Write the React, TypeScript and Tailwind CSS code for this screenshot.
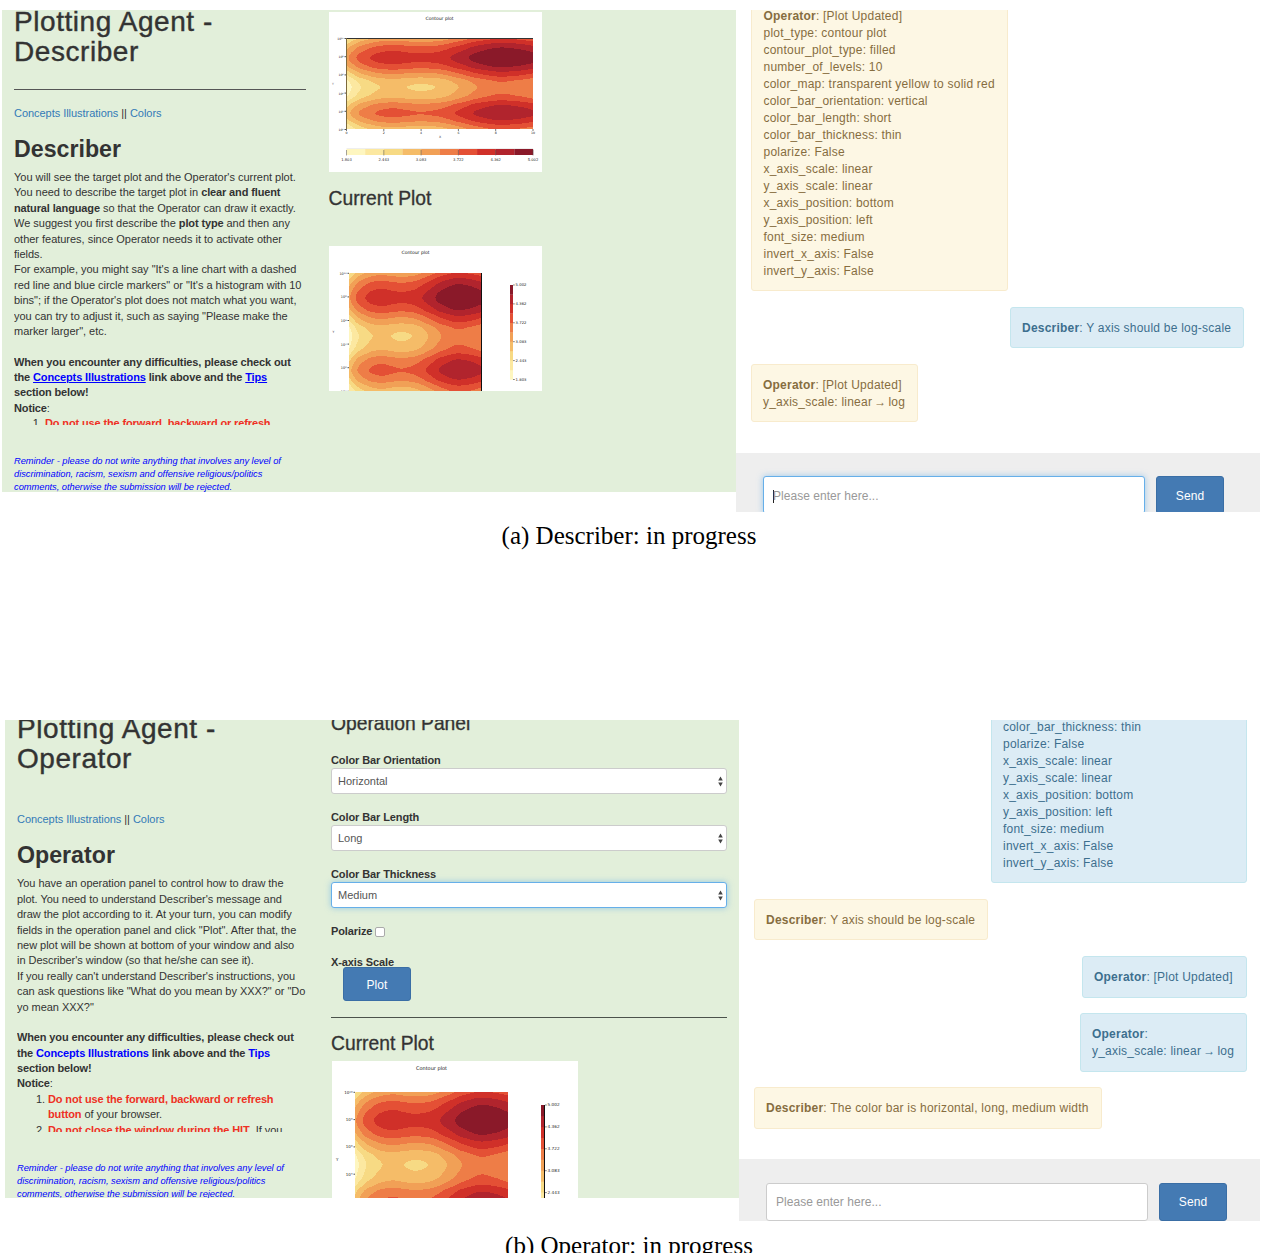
import React from "react";

const LEVEL_COLORS = [
  "#fef6c0", "#fce8a0", "#f7da84", "#f5bc68", "#f1a056",
  "#ee7d47", "#e45035", "#d03029", "#b1242d", "#8a1929",
];

type Knot = [number, number];

const X_PROFILE: Knot[] = [
  [0, 0.35], [0.025, 1], [0.075, 2], [0.18, 3], [0.25, 3.2], [0.32, 3], [0.395, 2.86],
  [0.475, 3], [0.6, 4], [0.7, 5], [0.83, 5.68], [0.92, 5.45], [1, 5],
];
const Y_PROFILE: Knot[] = [
  [0, 1.4], [0.04, 2.3], [0.1, 3.4], [0.21, 4.42], [0.31, 3.4], [0.36, 2.4], [0.417, 1.35], [0.468, 0.4],
  [0.535, 0], [0.617, 0.4], [0.68, 1.3], [0.73, 2.3], [0.825, 3.17], [0.905, 2.3], [0.955, 1.3], [1, 0.5],
];

// Cubic Hermite interpolation with slopes flattened at local extremes.
function sample(knots: Knot[], t: number): number {
  let i = 0;
  while (i < knots.length - 2 && t > knots[i + 1][0]) i++;
  const secant = (j: number) => (knots[j + 1][1] - knots[j][1]) / (knots[j + 1][0] - knots[j][0]);
  const slope = (j: number) => {
    if (j === 0) return secant(0);
    if (j === knots.length - 1) return secant(j - 1);
    const a = secant(j - 1);
    const b = secant(j);
    return a * b <= 0 ? 0 : (2 * a * b) / (a + b);
  };
  const [x0, y0] = knots[i];
  const [x1, y1] = knots[i + 1];
  const h = x1 - x0;
  const s = (t - x0) / h;
  return (
    (2 * s ** 3 - 3 * s ** 2 + 1) * y0 + (s ** 3 - 2 * s ** 2 + s) * h * slope(i) +
    (3 * s ** 2 - 2 * s ** 3) * y1 + (s ** 3 - s ** 2) * h * slope(i + 1)
  );
}

function Contour({ x, y, w, h }: { x: number; y: number; w: number; h: number }) {
  const paths = LEVEL_COLORS.map(() => "");
  const xs = Array.from({ length: w }, (_, i) => sample(X_PROFILE, (i + 0.5) / w));
  for (let r = 0; r < h; r++) {
    const b = sample(Y_PROFILE, (r + 0.5) / h);
    let start = 0;
    let current = -1;
    for (let c = 0; c <= w; c++) {
      const level = c === w ? -1 : Math.max(0, Math.min(9, Math.floor(xs[c] + b)));
      if (level !== current) {
        if (current >= 0) paths[current] += `M${x + start} ${y + r}h${c - start}v1h${start - c}z`;
        start = c;
        current = level;
      }
    }
  }
  return (
    <g shapeRendering="crispEdges">
      {paths.map((d, i) => <path key={i} d={d} fill={LEVEL_COLORS[i]} />)}
    </g>
  );
}

const BAR_LABELS = ["1.803", "2.443", "3.083", "3.722", "4.362", "5.002"];
const Y_LABELS = ["10¹⁰", "10⁸", "10⁶", "10⁴", "10²", "10⁰"];

function YTicks({ x, y, step, size }: { x: number; y: number; step: number; size: number }) {
  return (
    <g>
      {Y_LABELS.map((l, i) => (
        <g key={l}>
          <path d={`M${x - 1.5} ${y + i * step}h1.5`} stroke="#222" strokeWidth="0.8" />
          <text x={x - 2.5} y={y + i * step + 1.4} fontSize={size} textAnchor="end" fill="#222">{l}</text>
        </g>
      ))}
    </g>
  );
}

function VerticalBar({ x, y, w, cell, size }: { x: number; y: number; w: number; cell: number; size: number }) {
  return (
    <g>
      {LEVEL_COLORS.map((c, i) => (
        <rect key={c} x={x} y={y + (9 - i) * cell} width={w} height={cell + 0.2} fill={c} />
      ))}
      {BAR_LABELS.map((l, i) => (
        <g key={l}>
          <path d={`M${x + w} ${y + (10 - i * 2) * cell}h1.8`} stroke="#333" strokeWidth="0.6" />
          <text x={x + w + 2.6} y={y + (10 - i * 2) * cell + 1.4} fontSize={size} fill="#222">{l}</text>
        </g>
      ))}
    </g>
  );
}

const svgFont = "block bg-white font-['DejaVu_Sans',sans-serif]";

function TargetPlot() {
  return (
    <svg width="213" height="160" viewBox="0 0 213 160" className={svgFont}>
      <text x="110.5" y="8" fontSize="4.5" textAnchor="middle" fill="#111">Contour plot</text>
      <Contour x={18} y={27} w={186} h={90} />
      <path d="M17 26.5H204" stroke="#333" strokeWidth="1" />
      <path d="M17.5 26V117.5" stroke="#7d6a3c" strokeWidth="1" />
      <YTicks x={17} y={26.5} step={18.2} size={3} />
      {["0", "2", "4", "6", "8", "10"].map((l, i) => (
        <g key={l}>
          <path d={`M${17.5 + i * 37.3} 117v2`} stroke="#555" strokeWidth="0.8" />
          <text x={17.5 + i * 37.3} y="122" fontSize="3.2" textAnchor="middle" fill="#222">{l}</text>
        </g>
      ))}
      <text x="111" y="126" fontSize="3.2" textAnchor="middle" fill="#333">X</text>
      <text x="3" y="73" fontSize="3" fill="#666">Y</text>
      {LEVEL_COLORS.map((c, i) => (
        <rect key={c} x={17.5 + i * 18.65} y="137" width="18.8" height="6" fill={c} />
      ))}
      <path d="M17.5 136.5H204" stroke="#eee" />
      {BAR_LABELS.map((l, i) => (
        <g key={l}>
          <path d={`M${17.5 + i * 37.3} 138v5.5`} stroke="#444" strokeOpacity="0.6" strokeWidth="0.8" />
          <text x={17.5 + i * 37.3} y="148.6" fontSize="3.7" textAnchor="middle" fill="#222">{l}</text>
        </g>
      ))}
    </svg>
  );
}

function DescriberCurrentPlot() {
  return (
    <svg width="213" height="145" viewBox="0 0 213 145" className={svgFont}>
      <text x="86.5" y="8" fontSize="4.5" textAnchor="middle" fill="#111">Contour plot</text>
      <Contour x={20} y={27} w={132} h={118} />
      <path d="M152.5 27V145" stroke="#111" strokeWidth="1" />
      <YTicks x={20} y={27.3} step={23.6} size={3.4} />
      <text x="3.5" y="87" fontSize="3" fill="#222">Y</text>
      <VerticalBar x={181} y={39} w={3} cell={9.45} size={3.8} />
    </svg>
  );
}

function OperatorCurrentPlot() {
  return (
    <svg width="246" height="137" viewBox="0 0 246 137" className={svgFont}>
      <text x="99.5" y="8.5" fontSize="5" textAnchor="middle" fill="#111">Contour plot</text>
      <Contour x={23} y={31} w={153} h={136} />
      <YTicks x={23} y={31.3} step={27.3} size={4} />
      <text x="4" y="100" fontSize="4" fill="#222">Y</text>
      <VerticalBar x={209} y={44} w={4} cell={10.95} size={4.2} />
      <path d="M212.5 44V137" stroke="#111" strokeWidth="1" />
    </svg>
  );
}

function Line({ children }: { children?: React.ReactNode }) {
  return <div className="h-[15.4px] whitespace-nowrap">{children}</div>;
}

function B({ className = "", children }: { className?: string; children: React.ReactNode }) {
  return <b className={`tracking-[-0.13px] ${className}`}>{children}</b>;
}

function Title({ role }: { role: string }) {
  return (
    <h1 className="h-[60px] shrink-0 text-[28px] leading-[30px] tracking-[0.56px] whitespace-nowrap [-webkit-text-stroke:0.4px_#333]">
      Plotting Agent -<br />{role}
    </h1>
  );
}

function Links() {
  return (
    <div className="h-[15px] shrink-0 text-[11px] leading-[15px] tracking-[-0.04px] whitespace-nowrap">
      <span className="text-[#337ab7]">Concepts Illustrations</span> || <span className="text-[#337ab7]">Colors</span>
    </div>
  );
}

function RoleHeading({ role }: { role: string }) {
  return <h2 className="mt-[15px] h-[26px] shrink-0 text-[23.2px] leading-[26px] font-bold">{role}</h2>;
}

function Reminder({ className }: { className: string }) {
  return (
    <div className={`shrink-0 text-[9.3px] leading-[13px] tracking-[-0.02px] whitespace-nowrap text-[#0000ff] italic ${className}`}>
      Reminder - please do not write anything that involves any level of<br />
      discrimination, racism, sexism and offensive religious/politics<br />
      comments, otherwise the submission will be rejected.
    </div>
  );
}

function Notice({ linkClass }: { linkClass: string }) {
  return (
    <>
      <Line />
      <Line><B>When you encounter any difficulties, please check out</B></Line>
      <Line><B>the <span className={linkClass}>Concepts Illustrations</span> link above and the <span className={linkClass}>Tips</span></B></Line>
      <Line><B>section below!</B></Line>
      <Line><B>Notice</B>:</Line>
    </>
  );
}

function Item({ n, children }: { n?: string; children: React.ReactNode }) {
  return (
    <div className="flex h-[15.4px] whitespace-nowrap">
      <span className="w-[31px] shrink-0 pr-[3px] text-right">{n}</span>
      <span>{children}</span>
    </div>
  );
}

function Bubble({ tone, className = "", children }: { tone: "own" | "other"; className?: string; children: React.ReactNode }) {
  const color = tone === "own"
    ? "self-end bg-[#dcecf5] border-[#c4e6ee] text-[#3d6f8e]"
    : "self-start bg-[#fdf7e4] border-[#f8ebcd] text-[#866d3f]";
  return (
    <div className={`shrink-0 rounded-[3px] border px-[11px] text-[12px] leading-[17px] tracking-[0.22px] whitespace-nowrap ${color} ${className}`}>
      {children}
    </div>
  );
}

function ScaleChange() {
  return <>y_axis_scale: linear<span className="-mx-[1.5px]"> → </span>log</>;
}

function InputBar({ focused, className }: { focused?: boolean; className: string }) {
  const box = focused
    ? "pt-[2px] border-[#66afe9] shadow-[0_0_6px_rgba(102,175,233,0.6)]"
    : "border-[#ccc]";
  return (
    <div className={`flex shrink-0 items-start overflow-hidden bg-[#eee] pl-[27px] ${className}`}>
      <div className={`flex h-[38px] w-[382px] items-center rounded-[3px] border bg-white pl-[9px] text-[12px] tracking-[0.04px] text-[#999] ${box}`}>
        {focused && <span className="-mr-px h-[13px] w-px bg-[#222]" />}
        Please enter here...
      </div>
      <div className={`ml-[11px] flex h-[38px] w-[68px] items-center justify-center rounded-[3px] border border-[#3a6ea5] bg-[#447ab3] text-[12px] tracking-[0.1px] text-white ${focused ? "pt-[2px]" : ""}`}>
        Send
      </div>
    </div>
  );
}

function Select({ label, value, focused }: { label: string; value: string; focused?: boolean }) {
  const box = focused ? "border-[#66afe9] shadow-[0_0_6px_rgba(102,175,233,0.6)]" : "border-[#ccc]";
  return (
    <div className="h-[57px] shrink-0">
      <div className="h-[15px] text-[11px] leading-[15px] font-bold tracking-[-0.1px]">{label}</div>
      <div className={`flex h-[26px] w-[396px] items-center justify-between rounded-[3px] border bg-white pr-[3px] pl-[6px] text-[11px] text-[#555] ${box}`}>
        <span>{value}</span>
        <svg width="5" height="11" viewBox="0 0 5 11" fill="#444">
          <path d="M2.5 0.5L4.8 4.5H0.2zM2.5 10.5L4.8 6.5H0.2z" />
        </svg>
      </div>
    </div>
  );
}

const heading = "shrink-0 h-[22px] text-[19.3px] leading-[22px] whitespace-nowrap [-webkit-text-stroke:0.3px_#333]";

function DescriberView() {
  return (
    <div className="ml-[2px] flex h-[502px]">
      <div className="flex h-[482px] w-[734px] overflow-hidden bg-[#e2efda]">
        <div className="ml-[12px] flex w-[292px] shrink-0 flex-col">
          <div className="-mt-[3.5px]"><Title role="Describer" /></div>
          <div className="mt-[22.5px] mb-[15.7px] h-px shrink-0 bg-[#555]" />
          <Links />
          <RoleHeading role="Describer" />
          <div className="mt-[8.3px] h-[255.3px] shrink-0 overflow-hidden text-[11px] leading-[15.4px] tracking-[-0.02px]">
            <Line>You will see the target plot and the Operator's current plot.</Line>
            <Line>You need to describe the target plot in <B>clear and fluent</B></Line>
            <Line><B>natural language</B> so that the Operator can draw it exactly.</Line>
            <Line>We suggest you first describe the <B>plot type</B> and then any</Line>
            <Line>other features, since Operator needs it to activate other</Line>
            <Line>fields.</Line>
            <Line>For example, you might say "It's a line chart with a dashed</Line>
            <Line>red line and blue circle markers" or "It's a histogram with 10</Line>
            <Line>bins"; if the Operator's plot does not match what you want,</Line>
            <Line>you can try to adjust it, such as saying "Please make the</Line>
            <Line>marker larger", etc.</Line>
            <Notice linkClass="text-[#0000ff] underline" />
            <Item n="1."><B className="text-[#ee3124]">Do not use the forward, backward or refresh</B></Item>
          </div>
          <Reminder className="mt-[30.2px]" />
        </div>
        <div className="ml-[22.5px] flex flex-col">
          <div className="mt-[2px] ml-[0.5px] h-[160px] shrink-0"><TargetPlot /></div>
          <h3 className={`mt-[15.5px] ${heading}`}>Current Plot</h3>
          <div className="mt-[36.5px] ml-[0.5px] h-[145px] shrink-0"><DescriberCurrentPlot /></div>
        </div>
      </div>
      <div className="flex h-[502px] w-[524px] flex-col overflow-hidden">
        <div className="flex h-[443px] flex-col overflow-hidden pr-[16px] pl-[15px]">
          <Bubble tone="other" className="-mt-[15px] h-[296px] w-[257px] pt-[11.5px] pl-[11.5px]">
            <b>Operator</b>: [Plot Updated]<br />
            plot_type: contour plot<br />
            contour_plot_type: filled<br />
            number_of_levels: 10<br />
            color_map: transparent yellow to solid red<br />
            color_bar_orientation: vertical<br />
            color_bar_length: short<br />
            color_bar_thickness: thin<br />
            polarize: False<br />
            x_axis_scale: linear<br />
            y_axis_scale: linear<br />
            x_axis_position: bottom<br />
            y_axis_position: left<br />
            font_size: medium<br />
            invert_x_axis: False<br />
            invert_y_axis: False
          </Bubble>
          <Bubble tone="own" className="mt-[16px] h-[41px] w-[234px] pt-[12px]">
            <b>Describer</b>: Y axis should be log-scale
          </Bubble>
          <Bubble tone="other" className="mt-[16px] h-[58px] w-[167px] pt-[12px]">
            <b>Operator</b>: [Plot Updated]<br />
            <ScaleChange />
          </Bubble>
        </div>
        <InputBar focused className="h-[59px] pt-[23px]" />
      </div>
    </div>
  );
}

function OperatorView() {
  return (
    <div className="ml-[5px] flex h-[501px]">
      <div className="flex h-[478px] w-[734px] overflow-hidden bg-[#e2efda]">
        <div className="ml-[12px] flex w-[292px] shrink-0 flex-col">
          <div className="-mt-[6.5px]"><Title role="Operator" /></div>
          <div className="mt-[38.5px]"><Links /></div>
          <RoleHeading role="Operator" />
          <div className="mt-[8.4px] h-[255.6px] shrink-0 overflow-hidden text-[11px] leading-[15.4px] tracking-[-0.04px]">
            <Line>You have an operation panel to control how to draw the</Line>
            <Line>plot. You need to understand Describer's message and</Line>
            <Line>draw the plot according to it. At your turn, you can modify</Line>
            <Line>fields in the operation panel and click "Plot". After that, the</Line>
            <Line>new plot will be shown at bottom of your window and also</Line>
            <Line>in Describer's window (so that he/she can see it).</Line>
            <Line>If you really can't understand Describer's instructions, you</Line>
            <Line>can ask questions like "What do you mean by XXX?" or "Do</Line>
            <Line>yo mean XXX?"</Line>
            <Notice linkClass="text-[#0000ff]" />
            <Item n="1."><B className="text-[#ee3124]">Do not use the forward, backward or refresh</B></Item>
            <Item><B className="text-[#ee3124]">button</B> of your browser.</Item>
            <Item n="2."><B className="text-[#ee3124]">Do not close the window during the HIT</B>. If you</Item>
          </div>
          <Reminder className="mt-[30px]" />
        </div>
        <div className="ml-[22px] flex w-[397px] shrink-0 flex-col">
          <h3 className={`-mt-[7px] ${heading}`}>Operation Panel</h3>
          <div className="mt-[18px]">
            <Select label="Color Bar Orientation" value="Horizontal" />
            <Select label="Color Bar Length" value="Long" />
            <Select label="Color Bar Thickness" value="Medium" focused />
          </div>
          <div className="flex h-[15px] shrink-0 items-center text-[11px] leading-[15px] font-bold tracking-[-0.1px]">
            Polarize
            <span className="ml-[3px] h-[10px] w-[10px] rounded-[2px] border border-[#aaa] bg-white" />
          </div>
          <div className="mt-[16px] h-[12px] shrink-0 text-[11px] leading-[15px] font-bold tracking-[-0.1px]">X-axis Scale</div>
          <div className="ml-[12px] flex h-[34px] w-[68px] shrink-0 items-center justify-center rounded-[3px] border border-[#3a6ea5] bg-[#447ab3] pt-px text-[12px] tracking-[0.1px] text-white">
            Plot
          </div>
          <div className="mt-[16px] mr-px h-px shrink-0 bg-[#4b524b]" />
          <h3 className={`mt-[14.5px] ${heading}`}>Current Plot</h3>
          <div className="mt-[6.5px] ml-px h-[137px] shrink-0"><OperatorCurrentPlot /></div>
        </div>
      </div>
      <div className="flex h-[501px] w-[521px] flex-col overflow-hidden">
        <div className="flex h-[439px] flex-col overflow-hidden pr-[13px] pl-[15px]">
          <Bubble tone="own" className="-mt-[10px] h-[173px] w-[256px] pt-[7.5px]">
            color_bar_thickness: thin<br />
            polarize: False<br />
            x_axis_scale: linear<br />
            y_axis_scale: linear<br />
            x_axis_position: bottom<br />
            y_axis_position: left<br />
            font_size: medium<br />
            invert_x_axis: False<br />
            invert_y_axis: False
          </Bubble>
          <Bubble tone="other" className="mt-[16px] h-[41px] w-[234px] pt-[12px]">
            <b>Describer</b>: Y axis should be log-scale
          </Bubble>
          <Bubble tone="own" className="mt-[16px] h-[42px] w-[165px] pt-[12px]">
            <b>Operator</b>: [Plot Updated]
          </Bubble>
          <Bubble tone="own" className="mt-[15px] h-[59px] w-[167px] pt-[12px]">
            <b>Operator</b>:<br />
            <ScaleChange />
          </Bubble>
          <Bubble tone="other" className="mt-[15px] h-[42px] w-[348px] pt-[12px]">
            <b>Describer</b>: The color bar is horizontal, long, medium width
          </Bubble>
        </div>
        <InputBar className="h-[62px] pt-[24px]" />
      </div>
    </div>
  );
}

function Caption({ className, children }: { className: string; children: React.ReactNode }) {
  return (
    <p className={`h-[30px] shrink-0 text-center font-['Liberation_Serif',serif] text-[25px] leading-[30px] whitespace-nowrap text-black ${className}`}>
      {children}
    </p>
  );
}

export default function App() {
  return (
    <main className="flex h-[1253px] w-[1262px] flex-col overflow-hidden bg-white pt-[10px] font-['Liberation_Sans',Arial,sans-serif] text-[#333]">
      <DescriberView />
      <Caption className="mt-[9px] w-[1258px]">(a) Describer: in progress</Caption>
      <div className="mt-[169px]"><OperatorView /></div>
      <Caption className="mt-[10px] w-[1258px]">(b) Operator: in progress</Caption>
    </main>
  );
}
